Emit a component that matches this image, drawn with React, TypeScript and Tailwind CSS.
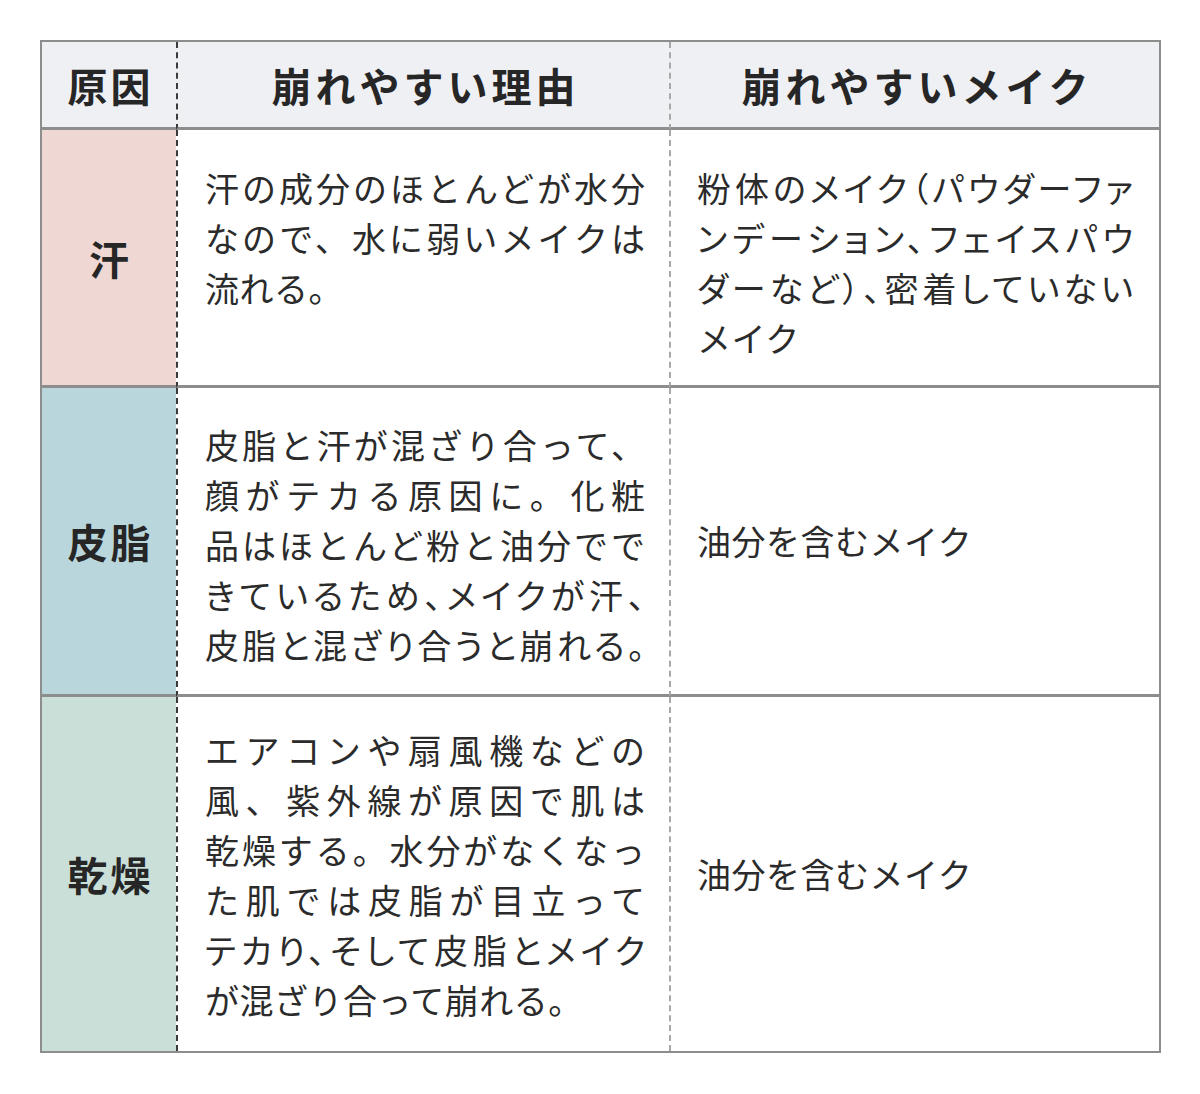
type Line = { text: string; full: boolean };

interface RowData {
  label: string;
  labelBg: string;
  reasonPad: string;
  reason: Line[];
  makeAlign: string;
  make: Line[];
  border: string;
}

const rows: RowData[] = [
  {
    label: "汗",
    labelBg: "bg-[#efd7d3]",
    reasonPad: "pt-[33px]",
    reason: [
      { text: "汗の成分のほとんどが水分", full: true },
      { text: "なので、水に弱いメイクは", full: true },
      { text: "流れる。", full: false },
    ],
    makeAlign: "justify-start pt-[33px]",
    make: [
      { text: "粉体のメイク（パウダーファ", full: true },
      { text: "ンデーション、フェイスパウ", full: true },
      { text: "ダーなど）、密着していない", full: true },
      { text: "メイク", full: false },
    ],
    border: "border-b-[3px]",
  },
  {
    label: "皮脂",
    labelBg: "bg-[#bad6dd]",
    reasonPad: "pt-[32px]",
    reason: [
      { text: "皮脂と汗が混ざり合って、", full: true },
      { text: "顔がテカる原因に。化粧", full: true },
      { text: "品はほとんど粉と油分でで", full: true },
      { text: "きているため、メイクが汗、", full: true },
      { text: "皮脂と混ざり合うと崩れる。", full: true },
    ],
    makeAlign: "justify-center",
    make: [{ text: "油分を含むメイク", full: false }],
    border: "border-b-[3px]",
  },
  {
    label: "乾燥",
    labelBg: "bg-[#cadfd8]",
    reasonPad: "pt-[28px]",
    reason: [
      { text: "エアコンや扇風機などの", full: true },
      { text: "風、紫外線が原因で肌は", full: true },
      { text: "乾燥する。水分がなくなっ", full: true },
      { text: "た肌では皮脂が目立って", full: true },
      { text: "テカり、そして皮脂とメイク", full: true },
      { text: "が混ざり合って崩れる。", full: false },
    ],
    makeAlign: "justify-center",
    make: [{ text: "油分を含むメイク", full: false }],
    border: "",
  },
];

// long lines need proportional kana to fit before being justified
const lineClass = (l: Line) => {
  if (!l.full) return "whitespace-nowrap tracking-[0.5px]";
  if (l.text.length >= 13)
    return "whitespace-nowrap text-justify [text-align-last:justify] [font-feature-settings:'palt']";
  return "whitespace-nowrap text-justify [text-align-last:justify]";
};

const TextLines = ({ lines }: { lines: Line[] }) => (
  <>
    {lines.map((l, i) => (
      <div key={i} className={lineClass(l)}>
        {l.text}
      </div>
    ))}
  </>
);

export default function App() {
  return (
    <div
      lang="ja"
      className="min-h-[1094px] w-[1200px] bg-white pt-[40px] pl-[40px] font-['Noto_Sans_CJK_JP','Noto_Sans_CJK_SC',sans-serif]"
    >
      <div className="grid w-[1121px] grid-cols-[134px_493px_490px] grid-rows-[88px_258px_309px_354px] border-2 border-[#8d8d8d]">
        {/* header */}
        <div className="flex items-center justify-center border-b-[3px] border-[#8d8d8d] bg-[#eef0f4] pl-[3px] text-[40px] font-bold tracking-[3px] text-[#262626]">
          原因
        </div>
        <div className="flex items-center justify-center border-b-[3px] border-l-2 border-b-[#8d8d8d] border-l-[#3a3a3a] bg-[#eef0f4] pl-[4px] text-[40px] font-bold tracking-[4px] text-[#262626] [border-left-style:dashed]">
          崩れやすい理由
        </div>
        <div className="flex items-center justify-center border-b-[3px] border-l-2 border-b-[#8d8d8d] border-l-[#a8a8a8] bg-[#eef0f4] pl-[4px] text-[40px] font-bold tracking-[4px] text-[#262626] [border-left-style:dashed]">
          崩れやすいメイク
        </div>

        {rows.map((r) => (
          <div key={r.label} className="contents">
            <div
              className={`flex items-center justify-center border-[#8d8d8d] ${r.border} ${r.labelBg} pl-[3px] text-[40px] font-bold tracking-[3px] text-[#262626]`}
            >
              {r.label}
            </div>
            <div
              className={`flex flex-col border-l-2 border-b-[#8d8d8d] border-l-[#3a3a3a] ${r.border} ${r.reasonPad} pl-[27px] pr-[24px] text-[34px] leading-[50px] text-[#2b2b2b] [border-left-style:dashed]`}
            >
              <TextLines lines={r.reason} />
            </div>
            <div
              className={`flex flex-col border-l-2 border-b-[#8d8d8d] border-l-[#a8a8a8] ${r.border} ${r.makeAlign} pl-[26px] pr-[26px] text-[34px] leading-[50px] text-[#2b2b2b] [border-left-style:dashed]`}
            >
              <TextLines lines={r.make} />
            </div>
          </div>
        ))}
      </div>
    </div>
  );
}
